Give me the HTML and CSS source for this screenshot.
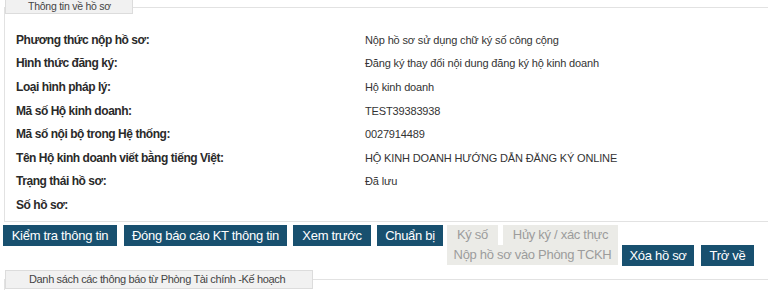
FILE: index.html
```html
<!DOCTYPE html>
<html lang="vi">
<head>
<meta charset="utf-8">
<title>Thông tin về hồ sơ</title>
<link rel="stylesheet" href="styles.css">
</head>
<body>
<fieldset class="box">
  <legend class="box-title">Thông tin về hồ sơ</legend>
  <div class="info">
    <div class="lbl">Phương thức nộp hồ sơ:</div><div class="val">Nộp hồ sơ sử dụng chữ ký số công cộng</div>
    <div class="lbl">Hình thức đăng ký:</div><div class="val">Đăng ký thay đổi nội dung đăng ký hộ kinh doanh</div>
    <div class="lbl">Loại hình pháp lý:</div><div class="val">Hộ kinh doanh</div>
    <div class="lbl">Mã số Hộ kinh doanh:</div><div class="val">TEST39383938</div>
    <div class="lbl">Mã số nội bộ trong Hệ thống:</div><div class="val">0027914489</div>
    <div class="lbl">Tên Hộ kinh doanh viết bằng tiếng Việt:</div><div class="val">HỘ KINH DOANH HƯỚNG DẪN ĐĂNG KÝ ONLINE</div>
    <div class="lbl">Trạng thái hồ sơ:</div><div class="val">Đã lưu</div>
    <div class="lbl">Số hồ sơ:</div><div class="val"></div>
  </div>
</fieldset>
<div class="actions">
  <button class="btn w-kiem">Kiểm tra thông tin</button>
  <button class="btn w-dong">Đóng báo cáo KT thông tin</button>
  <button class="btn w-xem">Xem trước</button>
  <button class="btn w-chuan">Chuẩn bị</button>
  <div class="group">
    <button class="btn off w-ky">Ký số</button>
    <button class="btn off w-huy">Hủy ký / xác thực</button>
    <button class="btn off w-nop">Nộp hồ sơ vào Phòng TCKH</button>
  </div>
  <button class="btn low w-xoa">Xóa hồ sơ</button>
  <button class="btn low w-tro">Trở về</button>
</div>
<fieldset class="box box2">
  <legend class="box-title title2">Danh sách các thông báo từ Phòng Tài chính -Kế hoạch</legend>
</fieldset>
</body>
</html>
```

FILE: styles.css
```css
html, body {
  margin: 0;
  padding: 0;
  background: #ffffff;
}
body {
  font-family: "Liberation Sans", Arial, sans-serif;
  color: #333;
  width: 768px;
  height: 290px;
  overflow: hidden;
}
.box {
  margin: 0 0 0 4px;
  padding: 0;
  border: 1px solid #e2e2e2;
  border-right: none;
}
.box-title {
  margin: 0;
  padding: 0 21px 0 22px;
  height: 13px;
  line-height: 13px;
  font-family: "Liberation Sans", Arial, sans-serif;
  font-size: 10.5px;
  letter-spacing: -0.25px;
  color: #444;
  background: #f1f1f1;
  border: 1px solid #dcdcdc;
  border-top: none;
}
.info {
  display: grid;
  grid-template-columns: 349px 1fr;
  grid-auto-rows: 23.6px;
  align-items: center;
  padding: 14px 0 4px 11px;
  font-size: 12px;
}
.lbl {
  color: #2a2a2a;
  font-weight: bold;
  letter-spacing: -0.45px;
}
.val {
  color: #333;
  font-size: 11px;
  letter-spacing: -0.15px;
}
.actions {
  display: flex;
  align-items: flex-start;
  padding: 3px 0 0 3px;
  height: 40px;
}
.btn {
  height: 21px;
  border: none;
  margin: 0 6px 0 0;
  padding: 0;
  background: #18506f;
  color: #fff;
  font-family: "Liberation Sans", Arial, sans-serif;
  font-size: 13px;
  letter-spacing: -0.3px;
  line-height: 21px;
  text-align: center;
}
.w-kiem { width: 114px; margin-right: 7px; }
.w-dong { width: 163px; }
.w-xem { width: 78px; }
.w-chuan { width: 66px; margin-right: 4px; }
.group {
  width: 172px;
  display: flex;
  flex-wrap: wrap;
  margin-right: 3px;
}
.off {
  background: #ebebe7;
  color: #9c9c9c;
  height: 20px;
  line-height: 20px;
}
.w-ky { width: 51px; margin-right: 5px; }
.w-huy { width: 115px; margin-right: 0; }
.w-nop { width: 171px; margin-right: 0; }
.low { margin-top: 20px; }
.w-xoa { width: 72px; margin-right: 7px; }
.w-tro { width: 53px; }
.box2 {
  margin-top: 5px;
  height: 30px;
}
.title2 {
  height: 17px;
  line-height: 17px;
  font-size: 11px;
  letter-spacing: -0.35px;
  padding: 0 27px 0 23px;
  border-top: 1px solid #dcdcdc;
}
```
